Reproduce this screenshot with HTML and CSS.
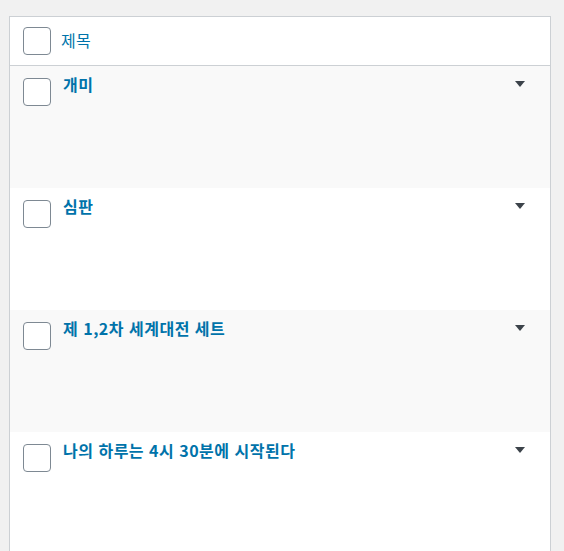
FILE: index.html
```html
<!DOCTYPE html>
<html lang="ko">
<head>
<meta charset="utf-8">
<link rel="stylesheet" href="styles.css">
</head>
<body>
<div class="table">
  <div class="head">
    <span class="cb"></span>
    <span class="head-title">제목</span>
  </div>
  <div class="row alt">
    <span class="cb"></span>
    <span class="title">개미</span>
    <span class="toggle"></span>
  </div>
  <div class="row">
    <span class="cb"></span>
    <span class="title">심판</span>
    <span class="toggle"></span>
  </div>
  <div class="row alt">
    <span class="cb"></span>
    <span class="title">제 1,2차 세계대전 세트</span>
    <span class="toggle"></span>
  </div>
  <div class="row">
    <span class="cb"></span>
    <span class="title">나의 하루는 4시 30분에 시작된다</span>
    <span class="toggle"></span>
  </div>
</div>
</body>
</html>
```
FILE: styles.css
```css
html, body {
  margin: 0;
  padding: 0;
  background: #f1f1f1;
  height: 100%;
  overflow: hidden;
}
body {
  padding: 16px 13px 0 9px;
  font-family: "Noto Sans CJK KR", "Noto Sans", sans-serif;
}
.table {
  background: #fff;
  border: 1px solid #ccd0d4;
  border-bottom: none;
}
.head {
  height: 48px;
  display: flex;
  align-items: center;
  padding-left: 13px;
  border-bottom: 1px solid #ccd0d4;
}
.cb {
  box-sizing: border-box;
  width: 28px;
  height: 28px;
  border: 1px solid #7e8993;
  border-radius: 4px;
  background: #fff;
  flex: none;
}
.head-title {
  margin-left: 10px;
  margin-top: -3px;
  color: #0073aa;
  font-size: 16px;
  line-height: 20px;
  letter-spacing: 0.3px;
}
.row {
  height: 122px;
  display: flex;
  align-items: flex-start;
  padding: 12px 0 0 13px;
  box-sizing: border-box;
}
.row.alt {
  background: #f9f9f9;
}
.title {
  margin-left: 12px;
  margin-top: -4px;
  color: #0073aa;
  font-weight: 600;
  font-size: 16px;
  line-height: 20px;
  letter-spacing: 0.5px;
  flex: 1;
}
.toggle {
  width: 0;
  height: 0;
  border-left: 5px solid transparent;
  border-right: 5px solid transparent;
  border-top: 6px solid #3c434a;
  margin: 3px 25px 0 0;
}
```
